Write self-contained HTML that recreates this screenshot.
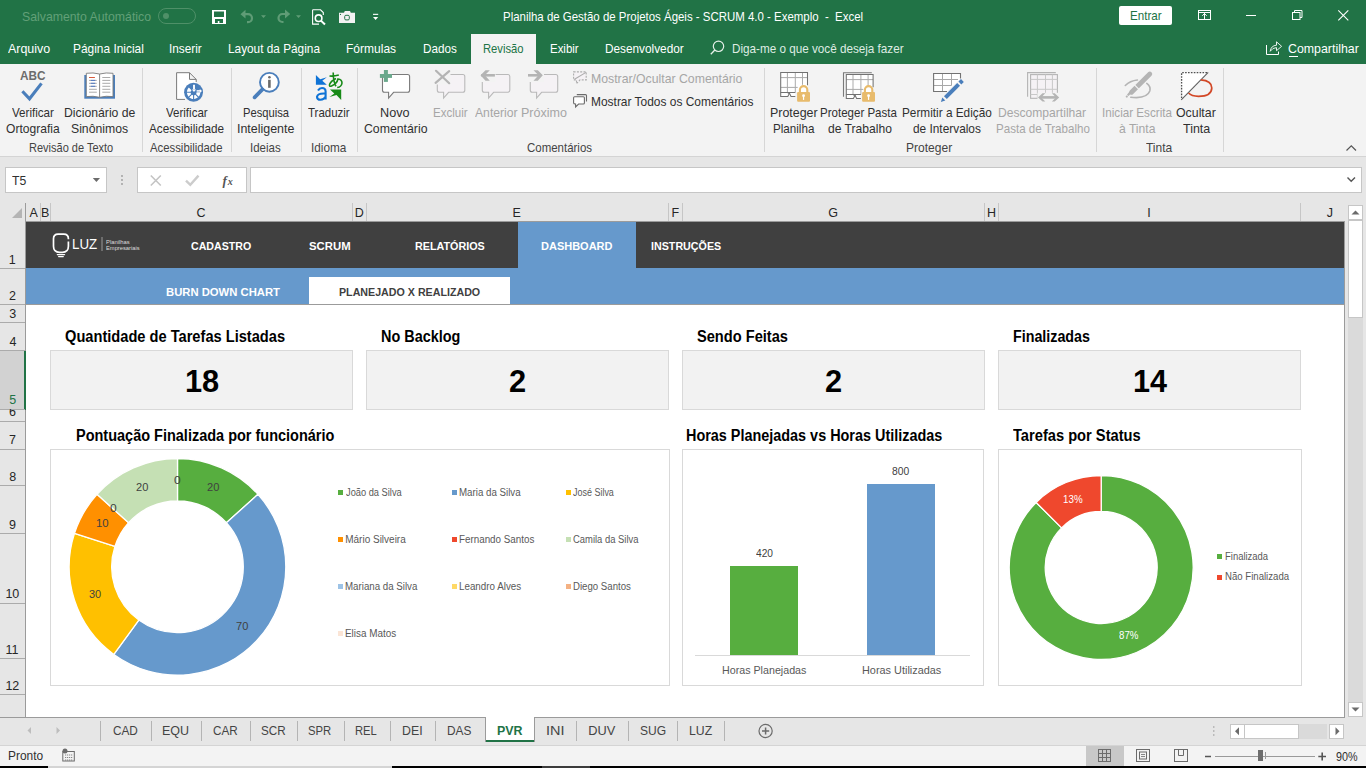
<!DOCTYPE html>
<html><head><meta charset="utf-8">
<style>
*{margin:0;padding:0;box-sizing:border-box}
html,body{width:1366px;height:768px;overflow:hidden;background:#fff;font-family:"Liberation Sans",sans-serif}
.a{position:absolute}
.t{position:absolute;white-space:nowrap;line-height:1;transform-origin:0 0}
svg.o{position:absolute;left:0;top:0}
</style></head><body>
<div class="a" style="left:0px;top:0px;width:1366px;height:64px;background:#217346;"></div>
<div class="a" style="left:471px;top:34px;width:65px;height:30px;background:#f3f3f3;"></div>
<div class="a" style="left:0px;top:64px;width:1366px;height:92px;background:#f3f3f3;"></div>
<div class="a" style="left:0px;top:156px;width:1366px;height:1px;background:#d4d4d4;"></div>
<div class="a" style="left:0px;top:157px;width:1366px;height:61px;background:#e6e6e6;"></div>
<div class="a" style="left:142px;top:68px;width:1px;height:84px;background:#d6d6d6;"></div>
<div class="a" style="left:231px;top:68px;width:1px;height:84px;background:#d6d6d6;"></div>
<div class="a" style="left:301px;top:68px;width:1px;height:84px;background:#d6d6d6;"></div>
<div class="a" style="left:357px;top:68px;width:1px;height:84px;background:#d6d6d6;"></div>
<div class="a" style="left:764px;top:68px;width:1px;height:84px;background:#d6d6d6;"></div>
<div class="a" style="left:1096px;top:68px;width:1px;height:84px;background:#d6d6d6;"></div>
<div class="a" style="left:1223px;top:68px;width:1px;height:84px;background:#d6d6d6;"></div>
<div class="a" style="left:5px;top:167px;width:102px;height:26px;background:#fff;border:1px solid #c6c6c6"></div>
<div class="a" style="left:137px;top:167px;width:110px;height:26px;background:#fff;border:1px solid #c6c6c6"></div>
<div class="a" style="left:250px;top:167px;width:1112px;height:26px;background:#fff;border:1px solid #c6c6c6"></div>
<div class="a" style="left:0px;top:203px;width:1366px;height:18px;background:#e6e6e6;"></div>
<div class="a" style="left:0px;top:221px;width:1345px;height:1px;background:#9b9b9b;"></div>
<div class="a" style="left:0px;top:221px;width:25px;height:497px;background:#e6e6e6;"></div>
<div class="a" style="left:25px;top:203px;width:1px;height:515px;background:#9b9b9b;"></div>
<div class="a" style="left:40px;top:203px;width:1px;height:18px;background:#c6c6c6;"></div>
<div class="a" style="left:50px;top:203px;width:1px;height:18px;background:#c6c6c6;"></div>
<div class="a" style="left:352px;top:203px;width:1px;height:18px;background:#c6c6c6;"></div>
<div class="a" style="left:366px;top:203px;width:1px;height:18px;background:#c6c6c6;"></div>
<div class="a" style="left:668px;top:203px;width:1px;height:18px;background:#c6c6c6;"></div>
<div class="a" style="left:682px;top:203px;width:1px;height:18px;background:#c6c6c6;"></div>
<div class="a" style="left:984px;top:203px;width:1px;height:18px;background:#c6c6c6;"></div>
<div class="a" style="left:998px;top:203px;width:1px;height:18px;background:#c6c6c6;"></div>
<div class="a" style="left:1300px;top:203px;width:1px;height:18px;background:#c6c6c6;"></div>
<div class="a" style="left:0px;top:351px;width:25px;height:58px;background:#d2d2d2;"></div>
<div class="a" style="left:24px;top:351px;width:2px;height:59px;background:#217346;"></div>
<div class="a" style="left:0px;top:268px;width:25px;height:1px;background:#ababab;"></div>
<div class="a" style="left:0px;top:304px;width:25px;height:1px;background:#ababab;"></div>
<div class="a" style="left:0px;top:322px;width:25px;height:1px;background:#ababab;"></div>
<div class="a" style="left:0px;top:350px;width:25px;height:1px;background:#ababab;"></div>
<div class="a" style="left:0px;top:409px;width:25px;height:1px;background:#ababab;"></div>
<div class="a" style="left:0px;top:421px;width:25px;height:1px;background:#ababab;"></div>
<div class="a" style="left:0px;top:449px;width:25px;height:1px;background:#ababab;"></div>
<div class="a" style="left:0px;top:485px;width:25px;height:1px;background:#ababab;"></div>
<div class="a" style="left:0px;top:533px;width:25px;height:1px;background:#ababab;"></div>
<div class="a" style="left:0px;top:603px;width:25px;height:1px;background:#ababab;"></div>
<div class="a" style="left:0px;top:658px;width:25px;height:1px;background:#ababab;"></div>
<div class="a" style="left:0px;top:694px;width:25px;height:1px;background:#ababab;"></div>
<div class="a" style="left:26px;top:222px;width:1318px;height:496px;background:#fff;"></div>
<div class="a" style="left:26px;top:222px;width:1318px;height:46px;background:#404040;"></div>
<div class="a" style="left:518px;top:222px;width:118px;height:46px;background:#6699cc;"></div>
<div class="a" style="left:26px;top:268px;width:1318px;height:36px;background:#6699cc;"></div>
<div class="a" style="left:309px;top:277px;width:201px;height:27px;background:#fff;"></div>
<div class="a" style="left:26px;top:304px;width:1318px;height:1px;background:#9b9b9b;"></div>
<div class="a" style="left:1344px;top:221px;width:1px;height:497px;background:#9b9b9b;"></div>
<div class="a" style="left:1345px;top:203px;width:21px;height:515px;background:#e6e6e6;"></div>
<div class="a" style="left:1348px;top:205px;width:15px;height:98px;background:#dadada;"></div>
<div class="a" style="left:1348px;top:205px;width:15px;height:15px;background:#fff;border:1px solid #c6c6c6"></div>
<div class="a" style="left:1348px;top:220px;width:15px;height:98px;background:#fff;border:1px solid #c6c6c6"></div>
<div class="a" style="left:1348px;top:318px;width:15px;height:385px;background:#dadada;"></div>
<div class="a" style="left:1348px;top:702px;width:15px;height:15px;background:#fff;border:1px solid #c6c6c6"></div>
<div class="a" style="left:50px;top:350px;width:303px;height:60px;background:#f2f2f2;border:1px solid #d9d9d9"></div>
<div class="a" style="left:366px;top:350px;width:303px;height:60px;background:#f2f2f2;border:1px solid #d9d9d9"></div>
<div class="a" style="left:682px;top:350px;width:303px;height:60px;background:#f2f2f2;border:1px solid #d9d9d9"></div>
<div class="a" style="left:998px;top:350px;width:303px;height:60px;background:#f2f2f2;border:1px solid #d9d9d9"></div>
<div class="a" style="left:50px;top:449px;width:620px;height:237px;background:#fff;border:1px solid #d9d9d9"></div>
<div class="a" style="left:682px;top:449px;width:302px;height:237px;background:#fff;border:1px solid #d9d9d9"></div>
<div class="a" style="left:998px;top:449px;width:304px;height:237px;background:#fff;border:1px solid #d9d9d9"></div>
<div class="a" style="left:0px;top:717px;width:1345px;height:1px;background:#9b9b9b;"></div>
<div class="a" style="left:0px;top:718px;width:1366px;height:27px;background:#e6e6e6;"></div>
<div class="a" style="left:0px;top:745px;width:1366px;height:1px;background:#d4d4d4;"></div>
<div class="a" style="left:485px;top:717px;width:50px;height:25px;background:#fff;border-left:1px solid #9b9b9b;border-right:1px solid #9b9b9b"></div>
<div class="a" style="left:486px;top:740px;width:48px;height:2px;background:#217346;"></div>
<div class="a" style="left:100px;top:721px;width:1px;height:20px;background:#b4b4b4;"></div>
<div class="a" style="left:151px;top:721px;width:1px;height:20px;background:#b4b4b4;"></div>
<div class="a" style="left:201px;top:721px;width:1px;height:20px;background:#b4b4b4;"></div>
<div class="a" style="left:250px;top:721px;width:1px;height:20px;background:#b4b4b4;"></div>
<div class="a" style="left:297px;top:721px;width:1px;height:20px;background:#b4b4b4;"></div>
<div class="a" style="left:344px;top:721px;width:1px;height:20px;background:#b4b4b4;"></div>
<div class="a" style="left:390px;top:721px;width:1px;height:20px;background:#b4b4b4;"></div>
<div class="a" style="left:435px;top:721px;width:1px;height:20px;background:#b4b4b4;"></div>
<div class="a" style="left:576px;top:721px;width:1px;height:20px;background:#b4b4b4;"></div>
<div class="a" style="left:628px;top:721px;width:1px;height:20px;background:#b4b4b4;"></div>
<div class="a" style="left:677px;top:721px;width:1px;height:20px;background:#b4b4b4;"></div>
<div class="a" style="left:724px;top:721px;width:1px;height:20px;background:#b4b4b4;"></div>
<div class="a" style="left:1230px;top:724px;width:15px;height:15px;background:#fff;border:1px solid #c6c6c6"></div>
<div class="a" style="left:1244px;top:724px;width:55px;height:15px;background:#fff;border:1px solid #c6c6c6"></div>
<div class="a" style="left:1299px;top:724px;width:28px;height:15px;background:#dadada;"></div>
<div class="a" style="left:1329px;top:724px;width:15px;height:15px;background:#fff;border:1px solid #c6c6c6"></div>
<div class="a" style="left:0px;top:746px;width:1366px;height:20px;background:#f3f3f3;"></div>
<div class="a" style="left:1086px;top:746px;width:38px;height:20px;background:#c8c8c8;"></div>
<div class="a" style="left:1215px;top:756px;width:100px;height:1px;background:#9a9a9a;"></div>
<div class="a" style="left:1258px;top:750px;width:5px;height:11px;background:#6d6d6d;"></div>
<div class="a" style="left:1265px;top:752px;width:1px;height:7px;background:#9a9a9a;"></div>
<div class="a" style="left:0px;top:766px;width:1366px;height:2px;background:#000;"></div>
<div class="a" style="left:48px;top:766px;width:344px;height:2px;background:#d4d4d4;"></div>
<div class="a" style="left:542px;top:766px;width:48px;height:2px;background:#3c3c3c;"></div>
<div class="a" style="left:1119px;top:6px;width:53px;height:19px;background:#fff;border-radius:2px"></div>
<div class="a" style="left:1289px;top:56px;width:9px;height:1px;background:#fff;"></div>
<div class="a" style="left:338px;top:490px;width:5px;height:5px;background:#57ae3f;"></div>
<div class="a" style="left:452px;top:490px;width:5px;height:5px;background:#6699cc;"></div>
<div class="a" style="left:566px;top:490px;width:5px;height:5px;background:#ffc000;"></div>
<div class="a" style="left:338px;top:537px;width:5px;height:5px;background:#ff9000;"></div>
<div class="a" style="left:452px;top:537px;width:5px;height:5px;background:#ef482d;"></div>
<div class="a" style="left:566px;top:537px;width:5px;height:5px;background:#c5e0b4;"></div>
<div class="a" style="left:338px;top:584px;width:5px;height:5px;background:#9dc3e6;"></div>
<div class="a" style="left:452px;top:584px;width:5px;height:5px;background:#ffd966;"></div>
<div class="a" style="left:566px;top:584px;width:5px;height:5px;background:#f4b183;"></div>
<div class="a" style="left:338px;top:631px;width:5px;height:5px;background:#fbe5d6;"></div>
<div class="a" style="left:695px;top:655px;width:275px;height:1px;background:#d9d9d9;"></div>
<div class="a" style="left:730px;top:566px;width:68px;height:89px;background:#57ae3f;"></div>
<div class="a" style="left:867px;top:484px;width:68px;height:171px;background:#6699cc;"></div>
<div class="a" style="left:1217px;top:554px;width:5px;height:5px;background:#57ae3f;"></div>
<div class="a" style="left:1217px;top:575px;width:5px;height:5px;background:#ef482d;"></div>
<svg class="o" width="1366" height="768" viewBox="0 0 1366 768">
<rect x="158.5" y="8.5" width="37" height="15" rx="7.5" fill="none" stroke="#4f9068" stroke-width="1"/>
<circle cx="166" cy="16" r="3" fill="#4f9068"/>
<rect x="212" y="10" width="14" height="14" fill="#fff"/><rect x="214" y="11.5" width="10" height="5.5" fill="#217346"/><rect x="215" y="19" width="8" height="4" fill="#217346"/><rect x="217.8" y="21" width="1.6" height="2" fill="#fff"/>
<path d="M244 14.2 H248 A4 4 0 0 1 248 22.2 H247" fill="none" stroke="#5f9c76" stroke-width="2.2"/><path d="M240.5 14.2 L245.5 9.8 L245.5 18.6 Z" fill="#5f9c76"/><path d="M261 15.3 h5 l-2.5 2.7z" fill="#5f9c76"/>
<path d="M286.5 14 H282.5 A4 4 0 0 0 282.5 22 H283.5" fill="none" stroke="#5f9c76" stroke-width="2.2"/><path d="M290.2 14 L285 9.6 L285 18.4 Z" fill="#5f9c76"/><path d="M296 15.2 h5 l-2.5 2.7z" fill="#5f9c76"/>
<path d="M312.6 9.8 H320.5 L323.3 12.6 V15 M312.6 9.8 V24.1 H319" fill="none" stroke="#fff" stroke-width="1.1"/><circle cx="318.6" cy="18.2" r="3.3" fill="none" stroke="#fff" stroke-width="1.6"/><path d="M320.9 20.6 L325 24.5" stroke="#fff" stroke-width="2"/>
<path d="M339 12.8 H344 L344.8 11 H350 L350.8 12.8 H355 V23 H339 Z" fill="#f2f2f2"/><rect x="344.7" y="15.3" width="4.6" height="4.6" rx="1.2" fill="none" stroke="#217346" stroke-width="1"/><circle cx="340.5" cy="14.4" r="0.6" fill="#217346"/>
<rect x="373" y="13.8" width="5.2" height="1.1" fill="#fff"/><path d="M373 17 h5.2 l-2.6 3z" fill="#fff"/>
<rect x="1198.5" y="10.5" width="12" height="9" fill="none" stroke="#fff" stroke-width="1"/><path d="M1198.5 12.5 H1210.5" stroke="#fff" stroke-width="1"/><path d="M1204.5 19.5 V13 M1202.3 15.8 L1204.5 13.5 L1206.7 15.8" fill="none" stroke="#fff" stroke-width="1"/>
<path d="M1246 15.5 H1256" stroke="#fff" stroke-width="1"/>
<rect x="1292.5" y="12.5" width="7.5" height="7" fill="none" stroke="#fff" stroke-width="1"/><path d="M1294.5 12.5 V10.5 H1302 V17.5 H1300" fill="none" stroke="#fff" stroke-width="1"/>
<path d="M1338.3 10.3 L1348.3 20.3 M1348.3 10.3 L1338.3 20.3" stroke="#fff" stroke-width="1.1"/>
<path d="M1266.5 45 V54.5 H1278.5 V51.5" fill="none" stroke="#fff" stroke-width="1"/><path d="M1270.2 51.3 Q1271 45.6 1276.5 45.2 V41.8 L1281.6 46.3 L1276.5 50.7 V47.6 Q1272.6 47.6 1270.2 51.3 Z" fill="none" stroke="#fff" stroke-width="0.9" stroke-linejoin="round"/>
<circle cx="718.5" cy="46.3" r="5.2" fill="none" stroke="#e6f0e9" stroke-width="1.2"/><path d="M714.8 50 L710.8 54.2" stroke="#e6f0e9" stroke-width="1.3"/>
<path d="M22.4 91.3 L29.5 98.8 L41.5 83.4" fill="none" stroke="#4a7ebb" stroke-width="3.1"/>
<rect x="84.3" y="75" width="30.7" height="23.7" fill="#4a7ebb"/>
<path d="M86.3 73.3 Q93 72.3 99.6 74 Q106.3 72.3 113 73.3 V96.6 Q106.3 95.6 99.6 97.3 Q93 95.6 86.3 96.6 Z" fill="#fff" stroke="#7a7a7a" stroke-width="0.9"/><path d="M99.6 74 V97.3" stroke="#7a7a7a" stroke-width="0.9"/>
<path d="M89 77.5 H94.9" stroke="#d24726" stroke-width="0.9"/>
<path d="M89 80.4 H96.8" stroke="#a0a0a0" stroke-width="0.9"/><path d="M90.8 80.4 H95.2" stroke="#4472c4" stroke-width="0.9"/>
<path d="M89 83.3 H96.8" stroke="#a0a0a0" stroke-width="0.9"/><path d="M90.8 83.3 H95.2" stroke="#4472c4" stroke-width="0.9"/>
<path d="M89 86.3 H96.8" stroke="#a0a0a0" stroke-width="0.9"/><path d="M90.8 86.3 H95.2" stroke="#4472c4" stroke-width="0.9"/>
<path d="M89 89.3 H96.8" stroke="#a0a0a0" stroke-width="0.9"/>
<path d="M89 92.2 H96.8" stroke="#a0a0a0" stroke-width="0.9"/>
<path d="M102.3 77.5 H110.3" stroke="#a0a0a0" stroke-width="0.9"/>
<path d="M102.3 80.4 H110.3" stroke="#a0a0a0" stroke-width="0.9"/>
<path d="M102.3 83.3 H110.3" stroke="#a0a0a0" stroke-width="0.9"/>
<path d="M102.3 86.3 H110.3" stroke="#a0a0a0" stroke-width="0.9"/>
<path d="M102.3 89.3 H110.3" stroke="#a0a0a0" stroke-width="0.9"/>
<path d="M102.3 92.2 H110.3" stroke="#a0a0a0" stroke-width="0.9"/>
<path d="M185 99.4 H176.6 V72.7 H189.5 L196.2 79.4 V82 M189.5 72.7 V79.4 H196.2" fill="#fff" stroke="#7a7a7a" stroke-width="1"/>
<circle cx="193.55" cy="92.3" r="9.45" fill="#4a7ebb"/>
<path d="M200.30 92.30 A6.7 6.7 0 1 1 188.86 87.56 L191.48 90.18 A3.0 3.0 0 1 0 196.60 92.30 Z" fill="#fff"/><path d="M193.60 92.30 L198.69 97.39 M193.60 92.30 L193.60 99.50 M193.60 92.30 L188.51 97.39 M193.60 92.30 L186.40 92.30" stroke="#4a7ebb" stroke-width="1.1"/>
<path d="M194 84.8 V89.6" stroke="#fff" stroke-width="1.9"/><path d="M191.9 89.6 H196.1 L194 92 Z" fill="#fff"/><path d="M196.6 90.9 H200" stroke="#fff" stroke-width="1.5"/><path d="M199.8 88.9 L202 90.9 L199.8 92.9 Z" fill="#fff"/>
<circle cx="269.4" cy="82.3" r="9.4" fill="#fff" stroke="#4a7ebb" stroke-width="1.9"/><path d="M262.4 89.4 L254.6 97.4" stroke="#4a7ebb" stroke-width="3.7" stroke-linecap="round"/><rect x="268.1" y="79.8" width="2.6" height="8" fill="#6b6b6b"/><circle cx="269.4" cy="77.3" r="1.3" fill="#6b6b6b"/>
<path d="M315.9 75 L315.9 84.8 L326.8 84.8 L322.3 80.8 L326.8 77.3 L320.2 79.2 Z" fill="#0f73d6"/>
<path d="M341.2 99.9 L341.2 89.6 L330 89.6 L334.3 93.4 L329.5 97 L336.5 95.1 Z" fill="#178a17"/>
<path d="M318 90.5 Q319.5 88 322 88 Q325.6 88 325.6 91.5 V99.6 M325.6 93.6 Q318 93 317 96.7 Q317 99.8 320.5 99.8 Q324 99.6 325.6 96.7" fill="none" stroke="#0f73d6" stroke-width="2.1"/>
<path d="M329.5 76 Q334 76.5 338.8 75 M333.2 72.5 Q333.3 82 336 86.3 M336 78.5 Q331 81 329.6 84.3 Q329 87 331.5 86 Q337 83.5 338 79 Q342 79.5 342 83 Q341.5 87 337.2 87.5" fill="none" stroke="#178a17" stroke-width="1.6"/>
<path d="M384.5 74.5 H407.6 Q409.6 74.5 409.6 76.5 V90.3 Q409.6 92.3 407.6 92.3 H393.6 L388.6 98 V92.3 H384.5 Q382.5 92.3 382.5 90.3 V76.5 Q382.5 74.5 384.5 74.5 Z" fill="#fff" stroke="#7a7a7a" stroke-width="1.1"/>
<rect x="379.9" y="74" width="12.1" height="3.9" fill="#6aa88c"/><rect x="383.9" y="70" width="4" height="11.9" fill="#6aa88c"/>
<path d="M439.3 74.5 H462.8 Q464.8 74.5 464.8 76.5 V90.3 Q464.8 92.3 462.8 92.3 H448.6 L443.6 98 V92.3 H439.3 Q437.3 92.3 437.3 90.3 V76.5 Q437.3 74.5 439.3 74.5 Z" fill="#f5f2f5" stroke="#b9b9b9" stroke-width="1.1"/>
<rect x="434.5" y="69.5" width="16" height="15" fill="#f3f3f3"/><path d="M436 70.8 L449.2 83.2 M449.2 71.2 L435.6 82.8" stroke="#b4b4b4" stroke-width="2.2" stroke-linecap="round"/>
<path d="M484.3 74.5 H507.8 Q509.8 74.5 509.8 76.5 V90.3 Q509.8 92.3 507.8 92.3 H493.6 L488.6 98 V92.3 H484.3 Q482.3 92.3 482.3 90.3 V76.5 Q482.3 74.5 484.3 74.5 Z" fill="#f5f2f5" stroke="#b9b9b9" stroke-width="1.1"/>
<rect x="479" y="69.5" width="16.5" height="12.5" fill="#f3f3f3"/><path d="M481.2 75.3 H494.9" stroke="#b4b4b4" stroke-width="2.6"/><path d="M480.5 75.3 L485.5 70.2 H489.8 L484.8 75.3 L489.8 80.8 H485.5 Z" fill="#b4b4b4"/>
<path d="M532.3 74.5 H555.7 Q557.7 74.5 557.7 76.5 V90.3 Q557.7 92.3 555.7 92.3 H541.6 L536.6 98 V92.3 H532.3 Q530.3 92.3 530.3 90.3 V76.5 Q530.3 74.5 532.3 74.5 Z" fill="#f5f2f5" stroke="#b9b9b9" stroke-width="1.1"/>
<rect x="527.5" y="69.5" width="16.5" height="12.5" fill="#f3f3f3"/><path d="M528 75.3 H541" stroke="#b4b4b4" stroke-width="2.6"/><path d="M542.8 75.3 L537.8 70.2 H533.5 L538.5 75.3 L533.5 80.8 H537.8 Z" fill="#b4b4b4"/>
<path d="M573.6 71.9 H586.2 V79.9 H580 L576.5 83.6 V79.9 H573.6 Z" fill="#f5f2f5" stroke="#adadad" stroke-width="1.1" stroke-dasharray="2 1.3"/><path d="M574.5 79.3 L586 72.4" stroke="#adadad" stroke-width="1.1"/>
<path d="M576.8 94.6 H585.5 Q586.5 94.6 586.5 95.6 V101.6" fill="none" stroke="#6b6b6b" stroke-width="1.1"/><path d="M574.6 96.7 H583.3 Q584.4 96.7 584.4 97.8 V103 Q584.4 104 583.3 104 H578.6 L575.6 107 V104 Q573.6 104 573.6 103 V97.8 Q573.6 96.7 574.6 96.7 Z" fill="#fff" stroke="#6b6b6b" stroke-width="1.1"/>
<path d="M780.7 72.5 H807.5 V92 H795.3 V96.4 H780.7 Z" fill="#fff"/>
<path d="M787.4 72.5 V92.4 M795.3 72.5 V92.4 M802.5 72.5 V84.8 M780.7 77.6 H807.5 M780.7 87.4 H797.7" stroke="#ababab" stroke-width="1" fill="none"/>
<path d="M795.3 96.4 V96.4 H791 L789.5 93.2 H787.8 M780.7 92.4 V72.5 H807.5 V85.3 M780.7 92.4 H795.3" stroke="#727272" stroke-width="1.05" fill="none"/>
<path d="M780.7 92 V96.4 H787.8 L789.5 93.2" stroke="#727272" stroke-width="1.05" fill="none"/>
<path d="M799.9 92.6 V89.8 A3.7 3.7 0 0 1 807.3000000000001 89.8 V92.6" fill="none" stroke="#e8bb6c" stroke-width="2.1"/>
<rect x="797.1" y="92.1" width="12.9" height="9.7" rx="1" fill="#e8bb6c"/><circle cx="803.5500000000001" cy="95.69999999999999" r="1.4" fill="#fff"/><rect x="802.95" y="95.89999999999999" width="1.2" height="4" fill="#fff"/>
<path d="M843.5 96.8 V72.8 H871.8" fill="none" stroke="#7a7a7a" stroke-width="1.1"/>
<path d="M846.3 74.5 H873.1 V94 H860.9 V98.4 H846.3 Z" fill="#fff"/>
<path d="M853.0 74.5 V94.4 M860.9 74.5 V94.4 M868.1 74.5 V86.8 M846.3 79.6 H873.1 M846.3 89.4 H863.3" stroke="#ababab" stroke-width="1" fill="none"/>
<path d="M860.9 98.4 V98.4 H856.6 L855.1 95.2 H853.4 M846.3 94.4 V74.5 H873.1 V87.3 M846.3 94.4 H860.9" stroke="#727272" stroke-width="1.05" fill="none"/>
<path d="M846.3 94 V98.4 H853.4 L855.1 95.2" stroke="#727272" stroke-width="1.05" fill="none"/>
<path d="M864.9 92.6 V89.8 A3.7 3.7 0 0 1 872.3000000000001 89.8 V92.6" fill="none" stroke="#e8bb6c" stroke-width="2.1"/>
<rect x="862.1" y="92.1" width="12.9" height="9.7" rx="1" fill="#e8bb6c"/><circle cx="868.5500000000001" cy="95.69999999999999" r="1.4" fill="#fff"/><rect x="867.95" y="95.89999999999999" width="1.2" height="4" fill="#fff"/>
<path d="M933.6 73.5 H960.5 V78.5 L956 83 L947 91.5 H933.6 Z" fill="#fff"/>
<path d="M942.5 73.5 V91.5 M951.5 73.5 V85.5 M933.6 79.5 H958 M933.6 85.5 H951.5" stroke="#a8a8a8" stroke-width="1" fill="none"/>
<path d="M947 91.5 H933.6 V73.5 H960.5 V78.6" stroke="#727272" stroke-width="1.1" fill="none"/>
<path d="M945.4 97.7 L958.6 84.3" stroke="#4a7ebb" stroke-width="4"/><path d="M959.9 83 L962.4 80.5" stroke="#4a7ebb" stroke-width="4"/><path d="M940.9 102 L942.3 97.6 L945.3 100.6 Z" fill="#4a7ebb"/>
<path d="M1027.6 96.8 V72.6 H1055.8" fill="none" stroke="#b4b4b4" stroke-width="1.1"/>
<rect x="1030.6" y="74.6" width="26.800000000000182" height="23.700000000000003" fill="#f5f2f5" stroke="#b4b4b4" stroke-width="1.1"/>
<path d="M1037.4 74.6 V98.3" stroke="#c8c8c8" stroke-width="1"/>
<path d="M1045.5 74.6 V98.3" stroke="#c8c8c8" stroke-width="1"/>
<path d="M1052.4 74.6 V98.3" stroke="#c8c8c8" stroke-width="1"/>
<path d="M1030.6 79.4 H1057.4" stroke="#c8c8c8" stroke-width="1"/>
<path d="M1030.6 89.3 H1057.4" stroke="#c8c8c8" stroke-width="1"/>
<path d="M1030.6 94.5 H1057.4" stroke="#c8c8c8" stroke-width="1"/>
<rect x="1037.5" y="92.8" width="22.5" height="9.5" fill="#f3f3f3"/><path d="M1041 97.4 H1056" stroke="#b4b4b4" stroke-width="2.6"/><path d="M1038 97.4 L1042.5 93.2 H1045.3 L1041.2 97.4 L1045.3 101.6 H1042.5 Z M1059.2 97.4 L1054.7 93.2 H1051.9 L1056 97.4 L1051.9 101.6 H1054.7 Z" fill="#b4b4b4"/>
<path d="M1125.3 85.5 Q1130 80.8 1137.4 80" fill="none" stroke="#b4b4b4" stroke-width="1.6" stroke-linecap="round"/><path d="M1146.8 83.4 Q1151 86.5 1149.8 91 Q1147.5 97.4 1136.5 97.6 Q1133 97.6 1130.8 97.2" fill="none" stroke="#b4b4b4" stroke-width="1.6" stroke-linecap="round"/>
<path d="M1149.8 74 L1131.5 92.3" stroke="#b4b4b4" stroke-width="4.8" stroke-linecap="round"/><path d="M1133.8 89.5 L1128 95.2" stroke="#f3f3f3" stroke-width="0"/><path d="M1134.2 84.6 L1139 89.4" stroke="#f3f3f3" stroke-width="1.3"/><path d="M1133 90 L1127.8 95.4 L1129.5 93" stroke="#b4b4b4" stroke-width="2"/><circle cx="1126.8" cy="96.6" r="1.1" fill="#b4b4b4"/>
<path d="M1181.4 72.5 H1208 L1181.4 99.5 Z" fill="#fff"/><path d="M1207 72.6 H1181.6 V99" fill="none" stroke="#505050" stroke-width="1.3" stroke-dasharray="1.6 1.3"/><path d="M1208.2 72.3 L1181.2 99.8" stroke="#606060" stroke-width="1.1"/><path d="M1200.8 79.8 Q1211.8 80.5 1211.8 88 Q1211.5 96.4 1198.5 96.4 Q1191.5 96.2 1188.6 93" fill="none" stroke="#d24726" stroke-width="1.7"/>
<path d="M1346.5 150.5 L1351.3 145.8 L1356 150.5" fill="none" stroke="#555" stroke-width="1.2"/>
<path d="M92.8 178 H100 L96.4 182 Z" fill="#6b6b6b"/>
<circle cx="122" cy="176" r="0.9" fill="#9a9a9a"/><circle cx="122" cy="180" r="0.9" fill="#9a9a9a"/><circle cx="122" cy="184" r="0.9" fill="#9a9a9a"/>
<path d="M150.8 175.5 L160.8 185.5 M160.8 175.5 L150.8 185.5" stroke="#c4c4c4" stroke-width="1.6"/><path d="M186 180.6 L190.3 184.8 L198.5 175.6" fill="none" stroke="#cccccc" stroke-width="2.4"/>
<text x="222.5" y="184.5" font-family="Liberation Serif" font-style="italic" font-weight="bold" font-size="13" fill="#555">f</text><text x="227.8" y="184.5" font-family="Liberation Serif" font-style="italic" font-weight="bold" font-size="10" fill="#555">x</text>
<path d="M1347.5 177.5 L1351.2 181.2 L1355 177.5" fill="none" stroke="#555" stroke-width="1.4"/>
<path d="M22 208 V218 H12 Z" fill="#b4b4b4"/>
<path d="M1351.5 214.5 H1359.5 L1355.5 210.5 Z" fill="#6b6b6b"/><path d="M1351.5 707.5 H1359.5 L1355.5 711.5 Z" fill="#6b6b6b"/>
<path d="M1235 731.3 L1239 727.3 V735.3 Z" fill="#6b6b6b"/><path d="M1339.5 731.3 L1335.5 727.3 V735.3 Z" fill="#6b6b6b"/>
<circle cx="1213.8" cy="727" r="0.8" fill="#9a9a9a"/><circle cx="1213.8" cy="731" r="0.8" fill="#9a9a9a"/><circle cx="1213.8" cy="735" r="0.8" fill="#9a9a9a"/>
<path d="M27.5 730.5 L31 727 V734 Z" fill="#bdbdbd"/><path d="M60 730.5 L56.5 727 V734 Z" fill="#bdbdbd"/>
<circle cx="765.6" cy="731" r="6.6" fill="none" stroke="#6b6b6b" stroke-width="1.2"/><path d="M762 731 H769.2 M765.6 727.4 V734.6" stroke="#6b6b6b" stroke-width="1.5"/>
<rect x="62.8" y="751.5" width="11.5" height="9.5" fill="none" stroke="#6b6b6b" stroke-width="1"/><circle cx="65" cy="751" r="2.5" fill="#6b6b6b"/><path d="M65 755 H73 M65 757.5 H73 M65 760 H73" stroke="#6b6b6b" stroke-width="0.8" stroke-dasharray="1.2 0.8"/>
<rect x="1098.5" y="749.5" width="12" height="12" fill="none" stroke="#6b6b6b" stroke-width="1"/><path d="M1102.5 749.5 V761.5 M1106.5 749.5 V761.5 M1098.5 753.5 H1110.5 M1098.5 757.5 H1110.5" stroke="#6b6b6b" stroke-width="1"/>
<rect x="1136.5" y="749.5" width="13" height="12" fill="none" stroke="#6b6b6b" stroke-width="1"/><rect x="1139.5" y="752" width="7" height="7" fill="none" stroke="#6b6b6b" stroke-width="1"/><path d="M1141 754.5 H1145 M1141 756.5 H1145" stroke="#6b6b6b" stroke-width="0.8"/>
<rect x="1174.5" y="749.5" width="13" height="12" fill="none" stroke="#6b6b6b" stroke-width="1"/><path d="M1178.5 749.5 V755.5 H1183.5 V749.5" fill="none" stroke="#6b6b6b" stroke-width="1"/>
<path d="M1205 756.5 H1211 M1318.3 756.5 H1326 M1322.2 752.6 V760.4" stroke="#555" stroke-width="1.6"/>
<path d="M68.4 239.2 V238.8 Q68.4 234.1 63.8 234.1 H58.1 Q53.5 234.1 53.5 238.8 V246.3 Q53.5 252.3 59.5 252.3 H62.4 Q68.4 252.3 68.4 246.3 V241.4" fill="none" stroke="#fff" stroke-width="1.7"/><path d="M57.3 254.6 H64.6 M58.6 256.6 H63.3" stroke="#fff" stroke-width="1.2" stroke-linecap="round"/><path d="M102 237 V251" stroke="#999" stroke-width="1"/>
<path d="M177.50 458.50 A108.30 108.30 0 0 1 257.98 494.33 L226.40 522.77 A65.80 65.80 0 0 0 177.50 501.00 Z" fill="#57ae3f" stroke="#fff" stroke-width="1.3" stroke-linejoin="bevel"/>
<path d="M257.98 494.33 A108.30 108.30 0 0 1 113.84 654.42 L138.82 620.03 A65.80 65.80 0 0 0 226.40 522.77 Z" fill="#6699cc" stroke="#fff" stroke-width="1.3" stroke-linejoin="bevel"/>
<path d="M113.84 654.42 A108.30 108.30 0 0 1 74.50 533.33 L114.92 546.47 A65.80 65.80 0 0 0 138.82 620.03 Z" fill="#ffc000" stroke="#fff" stroke-width="1.3" stroke-linejoin="bevel"/>
<path d="M74.50 533.33 A108.30 108.30 0 0 1 97.02 494.33 L128.60 522.77 A65.80 65.80 0 0 0 114.92 546.47 Z" fill="#ff9000" stroke="#fff" stroke-width="1.3" stroke-linejoin="bevel"/>
<path d="M97.02 494.33 A108.30 108.30 0 0 1 177.50 458.50 L177.50 501.00 A65.80 65.80 0 0 0 128.60 522.77 Z" fill="#c5e0b4" stroke="#fff" stroke-width="1.3" stroke-linejoin="bevel"/>
<path d="M1101.20 475.50 A92.00 92.00 0 1 1 1036.13 502.46 L1061.60 527.91 A56.00 56.00 0 1 0 1101.20 511.50 Z" fill="#57ae3f" stroke="#fff" stroke-width="1.3" stroke-linejoin="bevel"/>
<path d="M1036.15 502.45 A92.00 92.00 0 0 1 1101.20 475.50 L1101.20 511.50 A56.00 56.00 0 0 0 1061.60 527.90 Z" fill="#ef482d" stroke="#fff" stroke-width="1.3" stroke-linejoin="bevel"/>
</svg>
<div class="t" style="left:22.39px;top:11px;font-size:12.8px;color:#62a078;transform:scaleX(0.9597);">Salvamento Automático</div>
<div class="t" style="left:502.58px;top:11px;font-size:12.8px;color:#fff;transform:scaleX(0.8945);white-space:pre">Planilha de Gestão de Projetos Ágeis - SCRUM 4.0 - Exemplo  -  Excel</div>
<div class="t" style="left:1129.57px;top:10px;font-size:12.8px;color:#217346;transform:scaleX(0.9060);">Entrar</div>
<div class="t" style="left:8.00px;top:43px;font-size:12.8px;color:#fff;transform:scaleX(0.9725);">Arquivo</div>
<div class="t" style="left:72.55px;top:43px;font-size:12.8px;color:#fff;transform:scaleX(0.9305);">Página Inicial</div>
<div class="t" style="left:169.44px;top:43px;font-size:12.8px;color:#fff;transform:scaleX(0.9183);">Inserir</div>
<div class="t" style="left:228.15px;top:43px;font-size:12.8px;color:#fff;transform:scaleX(0.9231);">Layout da Página</div>
<div class="t" style="left:346.44px;top:43px;font-size:12.8px;color:#fff;transform:scaleX(0.9394);">Fórmulas</div>
<div class="t" style="left:422.56px;top:43px;font-size:12.8px;color:#fff;transform:scaleX(0.9138);">Dados</div>
<div class="t" style="left:549.58px;top:43px;font-size:12.8px;color:#fff;transform:scaleX(0.8947);">Exibir</div>
<div class="t" style="left:604.56px;top:43px;font-size:12.8px;color:#fff;transform:scaleX(0.9225);">Desenvolvedor</div>
<div class="t" style="left:482.50px;top:43px;font-size:12.8px;color:#217346;transform:scaleX(0.8772);">Revisão</div>
<div class="t" style="left:731.56px;top:43px;font-size:12.8px;color:#dfece3;transform:scaleX(0.9136);">Diga-me o que você deseja fazer</div>
<div class="t" style="left:1288.38px;top:43px;font-size:12.8px;color:#fff;transform:scaleX(0.9662);">Compartilhar</div>
<div class="t" style="left:12.18px;top:107px;font-size:12.8px;color:#303030;transform:scaleX(0.9075);">Verificar</div>
<div class="t" style="left:6.10px;top:123px;font-size:12.8px;color:#303030;transform:scaleX(0.9428);">Ortografia</div>
<div class="t" style="left:64.42px;top:107px;font-size:12.8px;color:#303030;transform:scaleX(0.9564);">Dicionário de</div>
<div class="t" style="left:71.39px;top:123px;font-size:12.8px;color:#303030;transform:scaleX(0.9552);">Sinônimos</div>
<div class="t" style="left:166.48px;top:107px;font-size:12.8px;color:#303030;transform:scaleX(0.9009);">Verificar</div>
<div class="t" style="left:149.40px;top:123px;font-size:12.8px;color:#303030;transform:scaleX(0.9178);">Acessibilidade</div>
<div class="t" style="left:242.80px;top:107px;font-size:12.8px;color:#303030;transform:scaleX(0.8741);">Pesquisa</div>
<div class="t" style="left:237.28px;top:123px;font-size:12.8px;color:#303030;transform:scaleX(0.9713);">Inteligente</div>
<div class="t" style="left:308.47px;top:107px;font-size:12.8px;color:#303030;transform:scaleX(0.8963);">Traduzir</div>
<div class="t" style="left:380.49px;top:107px;font-size:12.8px;color:#303030;transform:scaleX(0.9889);">Novo</div>
<div class="t" style="left:363.79px;top:123px;font-size:12.8px;color:#303030;transform:scaleX(0.9596);">Comentário</div>
<div class="t" style="left:433.48px;top:107px;font-size:12.8px;color:#a6a6a6;transform:scaleX(0.9021);">Excluir</div>
<div class="t" style="left:474.50px;top:107px;font-size:12.8px;color:#a6a6a6;transform:scaleX(0.9514);">Anterior</div>
<div class="t" style="left:520.50px;top:107px;font-size:12.8px;color:#a6a6a6;transform:scaleX(0.9793);">Próximo</div>
<div class="t" style="left:591.02px;top:73px;font-size:12.8px;color:#a6a6a6;transform:scaleX(0.9590);">Mostrar/Ocultar Comentário</div>
<div class="t" style="left:591.04px;top:96px;font-size:12.8px;color:#303030;transform:scaleX(0.9331);">Mostrar Todos os Comentários</div>
<div class="t" style="left:769.51px;top:107px;font-size:12.8px;color:#303030;transform:scaleX(0.9713);">Proteger</div>
<div class="t" style="left:772.57px;top:123px;font-size:12.8px;color:#303030;transform:scaleX(0.9092);">Planilha</div>
<div class="t" style="left:820.08px;top:107px;font-size:12.8px;color:#303030;transform:scaleX(0.9010);">Proteger Pasta</div>
<div class="t" style="left:827.52px;top:123px;font-size:12.8px;color:#303030;transform:scaleX(0.9447);">de Trabalho</div>
<div class="t" style="left:901.56px;top:107px;font-size:12.8px;color:#303030;transform:scaleX(0.9219);">Permitir a Edição</div>
<div class="t" style="left:912.53px;top:123px;font-size:12.8px;color:#303030;transform:scaleX(0.9264);">de Intervalos</div>
<div class="t" style="left:998.03px;top:107px;font-size:12.8px;color:#a6a6a6;transform:scaleX(0.9453);">Descompartilhar</div>
<div class="t" style="left:995.58px;top:123px;font-size:12.8px;color:#a6a6a6;transform:scaleX(0.9033);">Pasta de Trabalho</div>
<div class="t" style="left:1101.95px;top:107px;font-size:12.8px;color:#a6a6a6;transform:scaleX(0.9106);">Iniciar Escrita</div>
<div class="t" style="left:1118.52px;top:123px;font-size:12.8px;color:#a6a6a6;transform:scaleX(0.9470);">à Tinta</div>
<div class="t" style="left:1176.38px;top:107px;font-size:12.8px;color:#303030;transform:scaleX(0.9642);">Ocultar</div>
<div class="t" style="left:1182.75px;top:123px;font-size:12.8px;color:#303030;transform:scaleX(0.9721);">Tinta</div>
<div class="t" style="left:28.62px;top:142px;font-size:12.8px;color:#444;transform:scaleX(0.8600);">Revisão de Texto</div>
<div class="t" style="left:150.30px;top:142px;font-size:12.8px;color:#444;transform:scaleX(0.8858);">Acessibilidade</div>
<div class="t" style="left:250.37px;top:142px;font-size:12.8px;color:#444;transform:scaleX(0.8981);">Ideias</div>
<div class="t" style="left:311.14px;top:142px;font-size:12.8px;color:#444;transform:scaleX(0.9177);">Idioma</div>
<div class="t" style="left:527.43px;top:142px;font-size:12.8px;color:#444;transform:scaleX(0.8961);">Comentários</div>
<div class="t" style="left:906.04px;top:142px;font-size:12.8px;color:#444;transform:scaleX(0.9400);">Proteger</div>
<div class="t" style="left:1145.76px;top:142px;font-size:12.8px;color:#444;transform:scaleX(0.9361);">Tinta</div>
<div class="t" style="left:11.75px;top:175px;font-size:12.8px;color:#303030;transform:scaleX(0.9572);">T5</div>
<div class="t" style="left:29.38px;top:207px;font-size:12.5px;color:#262626;">A</div>
<div class="t" style="left:41.12px;top:207px;font-size:12.5px;color:#262626;">B</div>
<div class="t" style="left:196.44px;top:207px;font-size:12.5px;color:#262626;">C</div>
<div class="t" style="left:354.75px;top:207px;font-size:12.5px;color:#262626;">D</div>
<div class="t" style="left:512.56px;top:207px;font-size:12.5px;color:#262626;">E</div>
<div class="t" style="left:671.44px;top:207px;font-size:12.5px;color:#262626;">F</div>
<div class="t" style="left:828.31px;top:207px;font-size:12.5px;color:#262626;">G</div>
<div class="t" style="left:987.00px;top:207px;font-size:12.5px;color:#262626;">H</div>
<div class="t" style="left:1147.25px;top:207px;font-size:12.5px;color:#262626;">I</div>
<div class="t" style="left:1326.69px;top:207px;font-size:12.5px;color:#262626;">J</div>
<div class="t" style="left:8.70px;top:254px;font-size:12.5px;color:#262626;">1</div>
<div class="t" style="left:9.07px;top:290px;font-size:12.5px;color:#262626;">2</div>
<div class="t" style="left:9.20px;top:308px;font-size:12.5px;color:#262626;">3</div>
<div class="t" style="left:9.45px;top:336px;font-size:12.5px;color:#262626;">4</div>
<div class="t" style="left:9.07px;top:406px;font-size:12.5px;color:#262626;">6</div>
<div class="t" style="left:9.07px;top:434px;font-size:12.5px;color:#262626;">7</div>
<div class="t" style="left:9.20px;top:471px;font-size:12.5px;color:#262626;">8</div>
<div class="t" style="left:9.07px;top:519px;font-size:12.5px;color:#262626;">9</div>
<div class="t" style="left:5.40px;top:588px;font-size:12.5px;color:#262626;">10</div>
<div class="t" style="left:5.40px;top:644px;font-size:12.5px;color:#262626;">11</div>
<div class="t" style="left:5.40px;top:680px;font-size:12.5px;color:#262626;">12</div>
<div class="a" style="left:0px;top:351px;width:24px;height:58px;background:#d2d2d2;"></div>
<div class="t" style="left:9.20px;top:394px;font-size:12.5px;color:#217346;">5</div>
<div class="t" style="left:72.33px;top:237px;font-size:14.5px;color:#fff;transform:scaleX(0.9182);">LUZ</div>
<div class="t" style="left:105.94px;top:239px;font-size:6px;color:#ddd;transform:scaleX(0.9687);">Planilhas</div>
<div class="t" style="left:105.94px;top:245px;font-size:6px;color:#ddd;transform:scaleX(0.9603);">Empresariais</div>
<div class="t" style="left:191.07px;top:240px;font-size:11.6px;color:#fff;font-weight:bold;transform:scaleX(0.9160);">CADASTRO</div>
<div class="t" style="left:309.16px;top:240px;font-size:11.6px;color:#fff;font-weight:bold;transform:scaleX(0.9780);">SCRUM</div>
<div class="t" style="left:415.45px;top:240px;font-size:11.6px;color:#fff;font-weight:bold;transform:scaleX(0.9284);">RELATÓRIOS</div>
<div class="t" style="left:541.03px;top:240px;font-size:11.6px;color:#fff;font-weight:bold;transform:scaleX(0.9484);">DASHBOARD</div>
<div class="t" style="left:650.75px;top:240px;font-size:11.6px;color:#fff;font-weight:bold;transform:scaleX(0.9235);">INSTRUÇÕES</div>
<div class="t" style="left:166.11px;top:287px;font-size:11.8px;color:#fff;font-weight:bold;transform:scaleX(0.9556);">BURN DOWN CHART</div>
<div class="t" style="left:338.65px;top:287px;font-size:11.8px;color:#404040;font-weight:bold;transform:scaleX(0.9049);">PLANEJADO X REALIZADO</div>
<div class="t" style="left:65.01px;top:329px;font-size:16px;color:#000;font-weight:bold;transform:scaleX(0.9145);">Quantidade de Tarefas Listadas</div>
<div class="t" style="left:380.69px;top:329px;font-size:16px;color:#000;font-weight:bold;transform:scaleX(0.9014);">No Backlog</div>
<div class="t" style="left:696.56px;top:329px;font-size:16px;color:#000;font-weight:bold;transform:scaleX(0.9131);">Sendo Feitas</div>
<div class="t" style="left:1012.60px;top:329px;font-size:16px;color:#000;font-weight:bold;transform:scaleX(0.8925);">Finalizadas</div>
<div class="t" style="left:184.85px;top:366px;font-size:30.6px;color:#000;font-weight:bold;transform:scaleX(1.0058);">18</div>
<div class="t" style="left:509.18px;top:366px;font-size:30.6px;color:#000;font-weight:bold;transform:scaleX(1.0071);">2</div>
<div class="t" style="left:825.18px;top:366px;font-size:30.6px;color:#000;font-weight:bold;transform:scaleX(1.0071);">2</div>
<div class="t" style="left:1132.97px;top:366px;font-size:30.6px;color:#000;font-weight:bold;">14</div>
<div class="t" style="left:75.79px;top:428px;font-size:16px;color:#000;font-weight:bold;transform:scaleX(0.9054);">Pontuação Finalizada por funcionário</div>
<div class="t" style="left:685.79px;top:428px;font-size:16px;color:#000;font-weight:bold;transform:scaleX(0.9004);">Horas Planejadas vs Horas Utilizadas</div>
<div class="t" style="left:1012.85px;top:428px;font-size:16px;color:#000;font-weight:bold;transform:scaleX(0.9166);">Tarefas por Status</div>
<div class="t" style="left:113.01px;top:725px;font-size:12.8px;color:#444;transform:scaleX(0.9205);">CAD</div>
<div class="t" style="left:162.30px;top:725px;font-size:12.8px;color:#444;transform:scaleX(0.9756);">EQU</div>
<div class="t" style="left:212.92px;top:725px;font-size:12.8px;color:#444;transform:scaleX(0.9134);">CAR</div>
<div class="t" style="left:261.42px;top:725px;font-size:12.8px;color:#444;transform:scaleX(0.9134);">SCR</div>
<div class="t" style="left:308.44px;top:725px;font-size:12.8px;color:#444;transform:scaleX(0.8814);">SPR</div>
<div class="t" style="left:355.00px;top:725px;font-size:12.8px;color:#444;transform:scaleX(0.8752);">REL</div>
<div class="t" style="left:402.01px;top:725px;font-size:12.8px;color:#444;transform:scaleX(0.9635);">DEI</div>
<div class="t" style="left:447.45px;top:725px;font-size:12.8px;color:#444;transform:scaleX(0.9270);">DAS</div>
<div class="t" style="left:545.70px;top:725px;font-size:12.8px;color:#444;transform:scaleX(1.1293);">INI</div>
<div class="t" style="left:588.18px;top:725px;font-size:12.8px;color:#444;">DUV</div>
<div class="t" style="left:639.70px;top:725px;font-size:12.8px;color:#444;transform:scaleX(0.9421);">SUG</div>
<div class="t" style="left:689.22px;top:725px;font-size:12.8px;color:#444;transform:scaleX(0.9568);">LUZ</div>
<div class="t" style="left:497.13px;top:725px;font-size:12.8px;color:#217346;font-weight:bold;transform:scaleX(0.9686);">PVR</div>
<div class="t" style="left:7.65px;top:750px;font-size:12.8px;color:#303030;transform:scaleX(0.9303);">Pronto</div>
<div class="t" style="left:1336.36px;top:751px;font-size:12.8px;color:#303030;transform:scaleX(0.8426);">90%</div>
<div class="t" style="left:20.05px;top:70px;font-size:12.5px;color:#6b6b6b;font-weight:bold;transform:scaleX(0.9410);">ABC</div>
<div class="t" style="left:173.92px;top:475px;font-size:10.8px;color:#404040;transform:scaleX(1.1188);">0</div>
<div class="t" style="left:206.55px;top:482px;font-size:10.8px;color:#404040;transform:scaleX(1.0248);">20</div>
<div class="t" style="left:135.95px;top:482px;font-size:10.8px;color:#404040;transform:scaleX(1.0248);">20</div>
<div class="t" style="left:109.62px;top:503px;font-size:10.8px;color:#404040;transform:scaleX(1.1188);">0</div>
<div class="t" style="left:96.19px;top:518px;font-size:10.8px;color:#404040;transform:scaleX(1.0556);">10</div>
<div class="t" style="left:88.66px;top:589px;font-size:10.8px;color:#404040;transform:scaleX(1.0150);">30</div>
<div class="t" style="left:235.75px;top:621px;font-size:10.8px;color:#404040;transform:scaleX(1.0248);">70</div>
<div class="t" style="left:345.81px;top:488px;font-size:10px;color:#595959;transform:scaleX(0.9282);">João da Silva</div>
<div class="t" style="left:458.72px;top:488px;font-size:10px;color:#595959;transform:scaleX(0.9728);">Maria da Silva</div>
<div class="t" style="left:573.12px;top:488px;font-size:10px;color:#595959;transform:scaleX(0.8965);">José Silva</div>
<div class="t" style="left:345.20px;top:535px;font-size:10px;color:#595959;">Mário Silveira</div>
<div class="t" style="left:458.71px;top:535px;font-size:10px;color:#595959;transform:scaleX(0.9815);">Fernando Santos</div>
<div class="t" style="left:572.83px;top:535px;font-size:10px;color:#595959;transform:scaleX(0.9420);">Camila da Silva</div>
<div class="t" style="left:345.22px;top:582px;font-size:10px;color:#595959;transform:scaleX(0.9715);">Mariana da Silva</div>
<div class="t" style="left:458.72px;top:582px;font-size:10px;color:#595959;transform:scaleX(0.9807);">Leandro Alves</div>
<div class="t" style="left:572.53px;top:582px;font-size:10px;color:#595959;transform:scaleX(0.9643);">Diego Santos</div>
<div class="t" style="left:345.21px;top:629px;font-size:10px;color:#595959;transform:scaleX(0.9901);">Elisa Matos</div>
<div class="t" style="left:755.50px;top:548px;font-size:10.8px;color:#404040;transform:scaleX(0.9432);">420</div>
<div class="t" style="left:892.39px;top:466px;font-size:10.8px;color:#404040;transform:scaleX(0.9550);">800</div>
<div class="t" style="left:721.64px;top:665px;font-size:10.8px;color:#595959;transform:scaleX(0.9903);">Horas Planejadas</div>
<div class="t" style="left:861.53px;top:665px;font-size:10.8px;color:#595959;transform:scaleX(1.0087);">Horas Utilizadas</div>
<div class="t" style="left:1062.92px;top:494px;font-size:10.8px;color:#fff;transform:scaleX(0.9062);">13%</div>
<div class="t" style="left:1119.41px;top:630px;font-size:10.8px;color:#fff;transform:scaleX(0.8970);">87%</div>
<div class="t" style="left:1224.84px;top:552px;font-size:10px;color:#595959;transform:scaleX(0.9464);">Finalizada</div>
<div class="t" style="left:1224.83px;top:572px;font-size:10px;color:#595959;transform:scaleX(0.9605);">Não Finalizada</div>
</body></html>
